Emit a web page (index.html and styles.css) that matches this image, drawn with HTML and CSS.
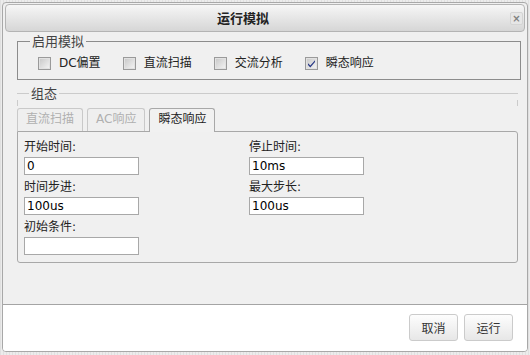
FILE: index.html
```html
<!DOCTYPE html>
<html lang="zh-CN">
<head>
<meta charset="utf-8">
<title>运行模拟</title>
<link rel="stylesheet" href="styles.css">
</head>
<body>
<div class="dialog">
  <div class="titlebar">
    <span class="title">运行模拟</span>
    <span class="close-wrap"><span class="close">×</span></span>
  </div>
  <div class="content">
    <fieldset class="group enable">
      <legend>启用模拟</legend>
      <div class="checks">
        <label class="check"><span class="cb"></span>DC偏置</label>
        <label class="check"><span class="cb"></span>直流扫描</label>
        <label class="check"><span class="cb"></span>交流分析</label>
        <label class="check"><span class="cb checked"><svg viewBox="0 0 13 13" width="13" height="13"><path d="M3 6.2 L5.3 8.6 L10 3.2 L10 5 L5.3 10.4 L3 8 Z" fill="#2a3a86"/></svg></span>瞬态响应</label>
      </div>
    </fieldset>
    <fieldset class="group config">
      <legend>组态</legend>
      <div class="tabs">
        <span class="tab disabled">直流扫描</span>
        <span class="tab disabled">AC响应</span>
        <span class="tab active">瞬态响应</span>
      </div>
      <div class="panel">
        <div class="field">
          <label>开始时间:</label>
          <input type="text" value="0">
        </div>
        <div class="field">
          <label>停止时间:</label>
          <input type="text" value="10ms">
        </div>
        <div class="field">
          <label>时间步进:</label>
          <input type="text" value="100us">
        </div>
        <div class="field">
          <label>最大步长:</label>
          <input type="text" value="100us">
        </div>
        <div class="field">
          <label>初始条件:</label>
          <input type="text" value="">
        </div>
      </div>
    </fieldset>
  </div>
  <div class="footer">
    <button class="btn">取消</button>
    <button class="btn">运行</button>
  </div>
</div>
</body>
</html>
```
FILE: styles.css
```css
* { box-sizing: border-box; }

html, body {
  margin: 0;
  padding: 0;
}

body {
  width: 530px;
  height: 355px;
  overflow: hidden;
  background-color: #ececec;
  background-image: repeating-linear-gradient(90deg, #e0e0e0 0 1px, transparent 1px 3px);
  font-family: "DejaVu Sans", "Noto Sans CJK SC", sans-serif;
  font-size: 12px;
  color: #222;
}

.dialog {
  margin: 2px 0 0 2px;
  width: 526px;
  height: 350px;
  border: 1px solid #a8a8a8;
  border-radius: 4px;
  background: #f0f0f0;
  padding: 1px 2px 0 2px;
  display: flex;
  flex-direction: column;
  overflow: hidden;
}

.titlebar {
  height: 28px;
  border: 1px solid #b4b4b4;
  border-radius: 4px;
  background: linear-gradient(#f6f6f6, #d6d6d6);
  display: flex;
  align-items: center;
}

.title {
  flex: 1;
  text-align: center;
  font-family: "Noto Sans CJK SC", sans-serif;
  font-weight: bold;
  font-size: 13px;
  line-height: 16px;
  color: #222;
}

.close-wrap {
  width: 44px;
  display: flex;
  justify-content: flex-end;
  padding-right: 1px;
}

.close {
  width: 13px;
  height: 13px;
  border: 1px solid #d4d4d4;
  border-radius: 2px;
  background: #e6e6e6;
  color: #808080;
  font-family: "DejaVu Sans", sans-serif;
  font-weight: bold;
  font-size: 10px;
  line-height: 11px;
  text-align: center;
}

.content {
  flex: 1;
  padding: 1px 4px 0 12px;
}

.group {
  margin: 0;
  padding: 0;
  min-width: 0;
}

.group legend {
  margin-left: 12px;
  padding: 0 2px;
  font-family: "Noto Sans CJK SC", sans-serif;
  font-size: 13px;
  line-height: 16px;
  color: #444;
}

.enable {
  border: 1px solid #8c8c8c;
}

.checks {
  display: flex;
  align-items: center;
  height: 18px;
  margin: 5px 0 7px;
  padding-left: 20px;
}

.check {
  display: inline-flex;
  align-items: center;
  gap: 8px;
  margin-right: 22px;
  font-size: 12px;
  line-height: 18px;
  color: #222;
}

.cb {
  width: 13px;
  height: 13px;
  border: 1px solid #9a9a9a;
  background: linear-gradient(135deg, #c6c6c6, #f6f6f6);
  box-shadow: inset 0 0 0 1px #e2e2e2;
  display: inline-block;
  position: relative;
}

.cb svg {
  position: absolute;
  left: -1px;
  top: -1px;
}

.config {
  margin: 5px 3px 0 0;
  border: none;
  border-top: 1px solid #cbcbcb;
  position: relative;
}

.config::before,
.config::after {
  content: "";
  position: absolute;
  top: -1px;
  width: 1px;
  height: 6px;
  background: #cbcbcb;
}

.config::before { left: 0; }
.config::after { right: 0; }

.tabs {
  display: flex;
  align-items: flex-end;
  gap: 4px;
  margin-top: 7px;
  height: 23px;
}

.tab {
  height: 23px;
  padding: 0 8px;
  border: 1px solid #c9c9c9;
  border-bottom: none;
  border-radius: 3px 3px 0 0;
  background: #efefef;
  font-family: "DejaVu Sans", "Noto Sans CJK SC", sans-serif;
  font-size: 12px;
  line-height: 21px;
}

.tab.disabled {
  color: #b0b0b0;
}

.tab.active {
  height: 24px;
  margin-bottom: -1px;
  border-color: #a8a8a8;
  background: #f1f1f1;
  color: #222;
  position: relative;
}

.panel {
  border: 1px solid #a8a8a8;
  border-radius: 0 3px 3px 3px;
  padding: 7px 6px 7px 6px;
  display: grid;
  grid-template-columns: 225px 1fr;
  row-gap: 4px;
}

.field label {
  display: block;
  font-size: 12px;
  line-height: 16px;
  color: #222;
}

.field input {
  display: block;
  margin: 2px 0 0;
  width: 115px;
  height: 18px;
  border: 1px solid #a8a8a8;
  border-radius: 0;
  background: #fff;
  padding: 0 2px;
  font-family: "DejaVu Sans", sans-serif;
  font-size: 12px;
  color: #000;
  outline: none;
}

.footer {
  height: 47px;
  margin: 0 -2px;
  border-top: 1px solid #a4a4a4;
  background: #fff;
  display: flex;
  justify-content: flex-end;
  align-items: flex-start;
  gap: 6px;
  padding: 9px 14px 0 0;
}

.btn {
  width: 49px;
  height: 27px;
  border: 1px solid #cbcbcb;
  border-radius: 3px;
  background: linear-gradient(#fdfdfd, #e7e7e7);
  font-family: "Noto Sans CJK SC", sans-serif;
  font-size: 12px;
  color: #333;
  padding: 0;
}
```
